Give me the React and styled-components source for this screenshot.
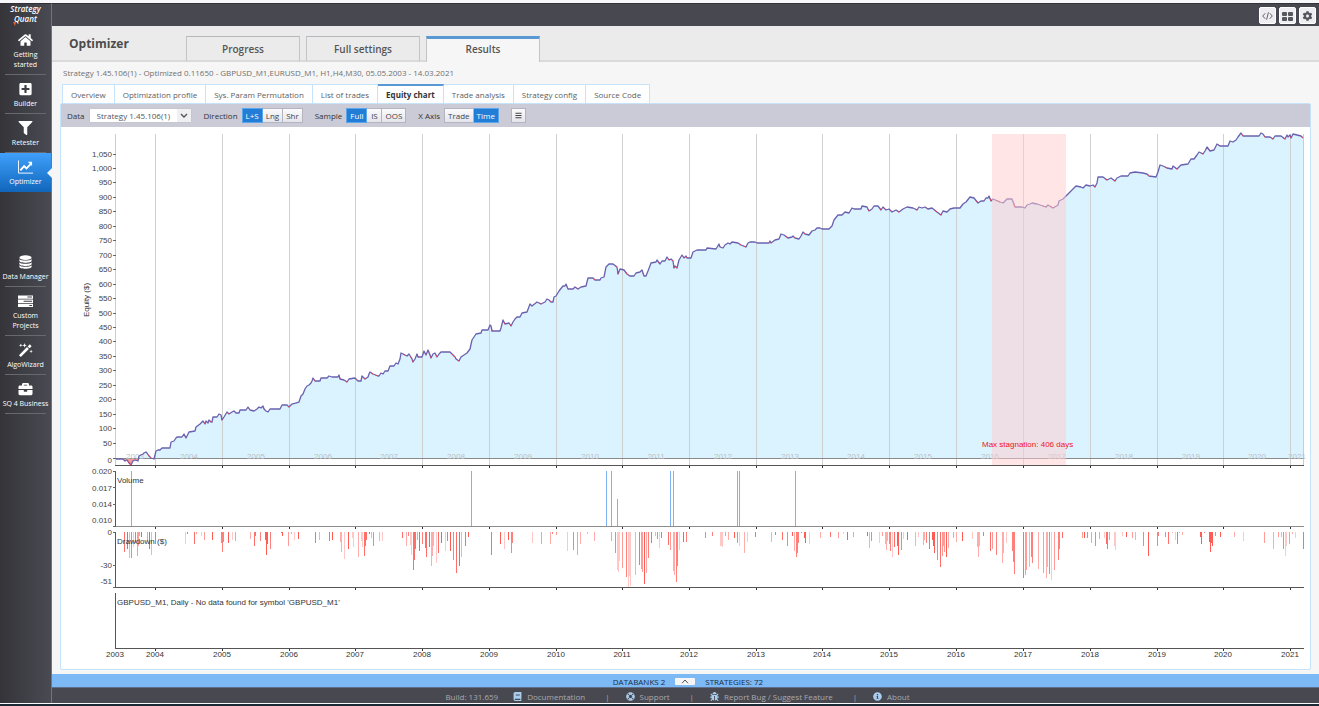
import React from "react"
import styled, {createGlobalStyle} from "styled-components"
import {FaHome, FaPlusSquare, FaFilter, FaBriefcase, FaCog, FaBars, FaBook, FaLifeRing, FaBug, FaInfoCircle} from "react-icons/fa";

const GlobalStyle = createGlobalStyle`
  * {
    box-sizing: border-box;
  }
  body {
    margin: 0;
    background: #f8f8fb;
    font-family: "Open Sans", sans-serif;
    font-size: 8px;
  }
  button, select {
    font-family: inherit;
    margin: 0;
  }
`;

const Page = styled.div`
  display: flex;
  min-height: 100vh;
  border-top: 3px solid #f8f8fb;
  border-bottom: 2px solid #1c2a36;
  padding-bottom: 1px;
`;

const Sidebar = styled.nav`
  flex: 0 0 52px;
  display: flex;
  flex-direction: column;
  background: linear-gradient(to right, #343439, #4a4a53);
  border-top: 1px solid #2f2f35;
  border-right: 1px solid #74747c;
`;

const Logo = styled.div`
  height: 21px;
  color: #ffffff;
  font-size: 8px;
  font-style: italic;
  font-weight: 600;
  line-height: 10px;
  text-align: center;
  svg {
    display: block;
    width: 4px;
    height: 4px;
    margin: -2px 0 0 13px;
  }
`;

const SideLink = styled.a`
  position: relative;
  display: flex;
  flex-direction: column;
  align-items: center;
  padding: 7px 0 5px;
  margin-top: ${props => props.$spaced ? "56px" : "0"};
  color: #ffffff;
  font-size: 7px;
  line-height: 10px;
  text-align: center;
  text-decoration: none;
  white-space: pre;
  background: ${props => props.$active ? "linear-gradient(#3fa0fb, #1166bb)" : "none"};
  svg {
    width: 15px;
    height: 14px;
    margin-bottom: 3px;
  }
  &::after {
    content: "";
    position: absolute;
    left: 5px;
    right: 5px;
    bottom: 0;
    border-bottom: 1px solid ${props => props.$active ? "transparent" : "#68686f"};
  }
`;

const Notch = styled.span`
  position: absolute;
  right: -1px;
  top: 50%;
  margin-top: -5px;
  border: 5px solid transparent;
  border-right-color: #f6f6f6;
  border-left-width: 0;
`;

const SideLinks = styled.div`
  padding-top: 1px;
`;

const Main = styled.main`
  flex: 1;
  min-width: 0;
  display: flex;
  flex-direction: column;
  background: #f6f6f6;
`;

const TopBar = styled.header`
  display: flex;
  justify-content: flex-end;
  gap: 3px;
  height: 23px;
  padding: 3px 3px 0;
  background: #484850;
  border-top: 1px solid #33333a;
`;

const IconButton = styled.button`
  display: flex;
  align-items: center;
  justify-content: center;
  width: 17px;
  height: 17px;
  padding: 0;
  border: 1px solid #ffffff;
  border-radius: 2px;
  background: #eeeef2;
  color: #55555d;
  svg {
    width: 11px;
    height: 10px;
  }
`;

const Header = styled.div`
  display: flex;
  align-items: flex-end;
  height: 36px;
  background: #ebebeb;
  border-bottom: 2px solid #dadada;
`;

const Title = styled.h1`
  width: 134px;
  margin: 0;
  padding: 2px 0 0 17px;
  color: #4c4c4c;
  font-size: 12px;
  line-height: 16px;
  font-weight: 700;
  align-self: center;
`;

const MainTabs = styled.div`
  display: flex;
  gap: 6px;
  margin-bottom: -2px;
`;

const MainTab = styled.button`
  width: 114px;
  height: 26px;
  padding: ${props => props.$active ? "0 0 3px" : "0"};
  border: 1px solid #c4c4c8;
  border-top: ${props => props.$active ? "3px solid #5a98d3" : "1px solid #b8b8bc"};
  border-bottom: ${props => props.$active ? "0" : "2px solid #dadada"};
  background: ${props => props.$active ? "#f6f6f6" : "#ebebeb"};
  color: #555555;
  font-size: 10px;
  font-weight: 600;
`;

const Content = styled.div`
  flex: 1;
  display: flex;
  flex-direction: column;
  padding: 0 8px 4px;
`;

const StrategyName = styled.div`
  height: 22px;
  padding: 5px 3px;
  color: #707070;
  font-size: 8px;
  line-height: 12px;
`;

const SubTabs = styled.div`
  display: flex;
  height: 19px;
  padding-left: 2px;
`;

const SubTab = styled.button`
  padding: 0 8px;
  border: 1px solid #c5e3fa;
  border-left-width: ${props => props.$first ? "1px" : "0"};
  border-bottom: 0;
  border-top: ${props => props.$active ? "2px solid #5a98d3" : "1px solid #c5e3fa"};
  background: #ffffff;
  color: ${props => props.$active ? "#333333" : "#606060"};
  font-size: 8px;
  font-weight: ${props => props.$active ? 700 : 400};
  white-space: nowrap;
`;

const Panel = styled.section`
  flex: 1;
  border: 1px solid #c5e3fa;
  border-radius: 2px;
  background: #ffffff;
`;

const Toolbar = styled.div`
  display: flex;
  align-items: center;
  height: 23px;
  padding-left: 6px;
  background: #cbcbd8;
  color: #333333;
  font-size: 8px;
`;

const Field = styled.div`
  display: flex;
  align-items: center;
  gap: 4px;
  margin-right: 12px;
`;

const Select = styled.select`
  appearance: none;
  width: 103px;
  height: 15px;
  padding: 0 16px 0 7px;
  border: 1px solid #c6c6cc;
  border-radius: 1px;
  color: #555555;
  font-size: 8px;
  background: #ffffff url("data:image/svg+xml,%3Csvg xmlns='http://www.w3.org/2000/svg' viewBox='0 0 14 13'%3E%3Cpath fill='%23f0f0f3' d='M0 0h14v13H0z'/%3E%3Cpath fill='none' stroke='%23555' stroke-width='1.4' d='M4 5l3 3 3-3'/%3E%3C/svg%3E") right center / 14px 13px no-repeat;
`;

const Group = styled.div`
  display: flex;
`;

const Toggle = styled.button`
  height: 15px;
  min-width: 15px;
  padding: 0 3px;
  border: 1px solid ${props => props.$on ? "#5ba5ea" : "#b4b4bf"};
  background: ${props => props.$on ? "#217dd6" : "linear-gradient(#fbfbfd, #e4e4ec)"};
  color: ${props => props.$on ? "#ffffff" : "#444444"};
  font-size: 8px;
  line-height: 12px;
  & + & {
    border-left: 0;
  }
  svg {
    display: block;
    width: 7px;
    height: 7px;
  }
`;

const Chart = styled.svg`
  display: block;
  width: 100%;
  height: auto;
  font-family: "Liberation Sans", Arial, sans-serif;
  font-size: 8px;
`;

const Databanks = styled.div`
  display: flex;
  align-items: center;
  justify-content: center;
  gap: 10px;
  height: 14px;
  padding: 1px 0 0 5px;
  background: #7cb9f5;
  border-bottom: 1px solid #5d6f8c;
  color: #1d2c3c;
  font-size: 8px;
`;

const Expand = styled.button`
  display: flex;
  align-items: center;
  justify-content: center;
  width: 20px;
  height: 7px;
  padding: 0;
  border: 0;
  border-radius: 1px;
  background: #f6f6f6;
  color: #555555;
  svg {
    width: 8px;
    height: 5px;
  }
`;

const Footer = styled.footer`
  display: flex;
  align-items: center;
  justify-content: center;
  height: 15px;
  padding-right: 16px;
  padding-top: 2px;
  background: #484850;
  color: #a9a9ae;
  font-size: 8px;
`;

const FooterLink = styled.a`
  display: flex;
  align-items: center;
  gap: 5px;
  color: inherit;
  text-decoration: none;
  svg {
    width: 9px;
    height: 9px;
    color: #a9cdec;
  }
`;

const Build = styled.span`
  margin-right: 15px;
`;

const Bar = styled.span`
  margin: 0 16px 0 20px;
`;

const DatabaseIcon = () => (
  <svg viewBox="0 0 16 16" fill="currentColor">
    <ellipse cx="8" cy="3" rx="7" ry="2.6"/>
    <path d="M1 4.6c1.5 2.3 12.500 2.300 14 0v2c0 3-14 3-14 0zM1 8.200c1.500 2.300 12.500 2.300 14 0v2c0 3-14 3-14 0zM1 11.800c1.500 2.300 12.500 2.300 14 0v1.600c0 3-14 3-14 0z"/>
  </svg>
)

const TasksIcon = () => (
  <svg viewBox="0 0 16 14" fill="currentColor" fillRule="evenodd">
    <path d="M0 1h16v3.500H0zM10 2.200h5v1h-5zM0 5.500h16V9H0zM6 6.700h9v1H6zM0 10h16v3.500H0zM12 11.200h3v1h-3z"/>
  </svg>
)

const TrendIcon = () => (
  <svg viewBox="0 0 16 14" fill="none" stroke="currentColor">
    <path d="M.5 0v13.500H16"/>
    <path d="M2.500 10.500l4-4.500 2.500 2.500L13.500 4" strokeWidth="2"/>
    <path d="M10.500 1.500H15V6z" fill="currentColor" stroke="none"/>
  </svg>
)

const WandIcon = () => (
  <svg viewBox="0 0 16 15" fill="currentColor">
    <path d="M1 13L9.600 4.400l2 2L3 15zM10.300 3.700L12.600 1.400l2 2-2.300 2.300z"/>
    <path d="M3 .5l.5 1.500 1.500.5-1.500.5L3 4.500 2.500 3 1 2.500 2.500 2zM7 0l.6 1.900 1.900.6-1.900.6L7 5l-.6-1.900-1.900-.6 1.900-.6zM14 7l.5 1.500 1.500.5-1.500.5-.5 1.500-.5-1.500L12 9l1.500-.5z"/>
  </svg>
)

const CodeIcon = () => (
  <svg viewBox="0 0 12 10" fill="none" stroke="currentColor">
    <path d="M3.500 2L.8 5l2.700 3M8.500 2l2.700 3-2.700 3M7 1L5 9"/>
  </svg>
)

const TilesIcon = () => (
  <svg viewBox="0 0 11 10" fill="currentColor">
    <rect x="0" y="1" width="5" height="4" rx="1"/>
    <rect x="6" y="1" width="5" height="4" rx="1"/>
    <rect x="0" y="6" width="5" height="4" rx="1"/>
    <rect x="6" y="6" width="5" height="4" rx="1"/>
  </svg>
)

const UpIcon = () => (
  <svg viewBox="0 0 8 5" fill="none" stroke="currentColor">
    <path d="M1 4.200L4 1l3 3.200"/>
  </svg>
)

const sideLinks = [
  {label: "Getting\nstarted", icon: FaHome},
  {label: "Builder", icon: FaPlusSquare},
  {label: "Retester", icon: FaFilter},
  {label: "Optimizer", icon: TrendIcon, active: true},
  {label: "Data Manager", icon: DatabaseIcon, spaced: true},
  {label: "Custom\nProjects", icon: TasksIcon},
  {label: "AlgoWizard", icon: WandIcon},
  {label: "SQ 4 Business", icon: FaBriefcase},
]

const subTabs = ["Overview", "Optimization profile", "Sys. Param Permutation", "List of trades", "Equity chart", "Trade analysis", "Strategy config", "Source Code"]

const equity = `116,459 122,459 124,460 125,461 127,460 129,463 131,465 133,461 135,460 138,461 139,456 141,455 143,454 144,453 146,452 147,453 149,456
151,458 154,459 155,455 156,451 158,450 160,450 162,448 170,448 171,442 174,441 176,438 177,437 182,437 184,434 186,438 188,434 189,432
195,431 196,427 200,424 203,421 205,424 206,421 208,423 209,420 211,422 212,422 213,417 217,417 219,414 221,415 222,420 224,417 227,412
229,414 232,412 234,411 236,413 239,413 240,410 246,410 248,407 250,410 254,411 257,409 259,407 261,408 263,406 264,409 266,411 268,412
270,409 280,409 282,405 287,405 289,407 292,404 299,402 301,396 303,394 305,389 307,386 309,385 311,383 312,381 313,378 315,381 320,381
321,378 327,378 329,376 332,377 338,377 339,375 340,379 344,380 347,382 349,379 355,378 358,381 361,381 362,376 365,379 368,377 369,374
370,372 373,374 378,376 379,376 381,373 383,374 385,371 388,371 390,366 394,366 396,363 398,364 400,359 401,353 405,355 407,356 409,354
412,359 413,362 415,359 417,354 418,357 422,357 424,351 426,355 428,350 430,355 431,358 433,354 435,353 437,357 439,354 441,352 450,352
453,355 455,357 456,359 459,361 461,357 464,355 467,353 470,349 472,340 474,337 476,334 481,333 482,330 488,330 490,325 491,326 492,331
500,331 501,328 503,320 505,324 509,323 511,326 513,322 515,319 517,317 520,317 522,313 527,312 530,304 532,306 537,302 541,304 545,302
547,299 549,300 551,302 553,302 554,297 556,296 559,291 563,286 565,286 566,284 568,289 573,289 575,287 578,289 581,287 586,286 588,278
593,278 595,280 600,280 601,278 604,277 606,267 609,264 613,264 617,267 618,274 620,269 624,270 627,274 630,276 634,276 636,273 640,272
642,270 644,276 646,276 648,271 651,263 656,262 657,260 660,264 662,261 665,261 667,257 669,260 671,259 673,261 674,268 675,266 677,268
679,260 682,255 684,258 686,256 687,258 691,258 693,252 697,250 706,250 707,248 716,249 719,244 720,247 723,248 725,245 728,243 730,244
732,242 738,243 741,245 746,247 748,243 750,242 755,242 757,243 769,243 770,241 771,243 775,240 779,239 781,234 784,235 788,238 792,237
793,236 795,238 799,239 801,236 803,232 805,234 809,235 812,231 815,230 817,228 820,228 822,229 829,229 832,226 834,220 838,215 842,215
845,212 849,213 852,208 854,209 861,209 862,206 867,207 869,211 872,209 874,206 878,206 881,210 883,207 886,210 889,209 892,212 896,210
899,212 903,209 907,207 913,208 917,210 919,207 922,208 925,207 928,209 932,208 937,212 941,215 943,211 947,212 950,209 954,208 960,208
963,204 966,202 970,197 974,198 978,203 981,201 984,201 986,198 988,198 989,196 991,201 993,199 1000,202 1003,203 1007,199 1012,199
1015,207 1022,207 1025,208 1027,205 1030,204 1032,203 1037,204 1040,205 1046,207 1048,205 1053,208 1058,205 1059,201 1063,199 1066,196
1070,192 1076,186 1081,187 1083,188 1086,185 1090,186 1093,185 1095,187 1097,183 1098,177 1103,177 1107,180 1111,178 1115,181 1117,178
1121,176 1128,176 1130,173 1135,172 1143,173 1147,174 1149,176 1156,177 1158,172 1160,165 1163,166 1167,168 1172,169 1173,166 1177,169
1181,165 1188,164 1191,159 1194,159 1197,155 1199,152 1203,154 1205,151 1207,147 1210,151 1214,150 1217,144 1220,146 1228,146 1230,141
1233,142 1236,140 1238,137 1241,133 1243,136 1259,136 1261,133 1263,134 1265,137 1270,137 1273,139 1275,136 1281,136 1285,139 1287,135
1288,137 1290,135 1291,138 1293,134 1297,135 1301,136 1303,138`.split(/\s+/).map(p => p.split(",").map(Number))

// x and length of every drawdown bar
const drawdowns = `124,20 127,17 129,26 131,26 133,15 135,11 137,24 138,14 139,4 141,5 147,8 149,17 151,23 155,12 185,12 187,2 194,12 196,2
201,4 204,8 212,8 221,11 222,20 223,10 228,11 232,8 235,9 250,7 254,14 255,4 260,9 265,8 266,23 267,12 270,17 281,1 282,4 288,14 291,2
294,8 298,7 315,11 319,8 329,9 332,8 340,10 341,20 344,27 348,17 352,6 353,15 358,25 361,9 362,15 364,24 365,14 366,8 369,2 371,6 373,14
379,9 382,9 402,6 406,14 408,4 410,13 411,23 413,38 414,28 415,17 417,8 419,19 422,12 425,16 426,25 429,15 431,34 432,24 433,14 436,31
438,21 441,11 445,19 447,9 450,19 453,28 456,41 459,34 461,25 465,14 468,5 491,23 500,12 504,17 508,8 511,21 512,11 532,11 541,12 550,12
552,2 556,3 567,19 573,18 577,23 580,12 587,2 594,9 611,9 615,21 617,38 618,40 619,29 622,36 626,45 628,55 629,44 630,54 635,43 639,33
641,37 642,40 644,52 646,41 648,26 651,11 655,4 657,7 659,16 661,6 668,13 670,18 673,39 674,43 676,50 677,34 679,18 683,10 686,10 705,6
712,4 720,14 721,14 722,15 725,4 728,8 734,6 737,11 739,14 744,21 747,10 755,5 771,10 775,3 782,8 787,14 792,4 794,19 796,25 797,21
798,11 801,1 804,6 805,11 809,12 820,6 830,5 838,6 843,2 847,8 853,5 867,4 869,16 871,9 879,11 882,4 885,12 886,18 887,9 889,12 890,19
892,25 894,15 897,14 898,23 901,18 903,7 907,8 915,14 918,5 923,13 924,8 926,11 929,17 932,8 933,14 934,21 937,28 940,35 942,24 943,14
944,20 946,25 948,16 953,6 956,10 962,9 972,7 977,15 978,25 979,14 983,4 990,19 992,17 996,23 1002,31 1003,21 1006,11 1012,19 1013,30
1014,42 1023,46 1025,43 1026,38 1029,35 1031,25 1032,31 1038,37 1043,41 1046,46 1047,35 1049,42 1051,48 1054,38 1058,28 1059,17 1062,6
1082,6 1084,6 1087,6 1091,11 1095,14 1099,7 1104,6 1106,12 1107,17 1109,8 1114,14 1115,18 1122,4 1126,5 1132,6 1135,8 1143,14 1148,24
1157,14 1158,4 1165,5 1168,12 1172,1 1175,8 1177,12 1179,1 1182,3 1200,5 1201,12 1204,1 1209,10 1210,20 1211,11 1212,14 1215,4 1220,5
1234,5 1243,9 1264,11 1273,17 1278,5 1281,5 1283,17 1285,24 1286,14 1289,12 1292,2 1295,6 1303,17`.split(/\s+/).map(p => p.split(",").map(Number))

const volumes = [[131, 471], [471, 471], [606, 471], [611, 471], [617, 499], [670, 471], [673, 471], [737, 471], [739, 471], [795, 471]]

const years = [155, 222, 289, 355, 422, 489, 556, 622, 689, 756, 822, 889, 956, 1023, 1090, 1157, 1223, 1290]

const barOpacity = [0.9, 0.45, 0.7, 0.3, 0.8, 0.55]

function EquityChart() {
  const line = equity.map(p => p.join(",")).join(" ")
  const area = `116,458 ${line} 1303,458`
  const losses = equity.slice(1).map((p, i) => [equity[i], p]).filter(([a, b]) => b[1] - a[1] > 1)
  const steps = Array.from({length: 21}, (_, i) => (i + 1) * 50)
  return <Chart viewBox="61 127 1249 542" role="img" aria-label="Equity chart">
    <defs>
      <clipPath id="profit"><rect x="115" y="127" width="1190" height="331"/></clipPath>
      <clipPath id="loss"><rect x="115" y="458" width="1190" height="9"/></clipPath>
    </defs>
    <polygon points={area} fill="#daf3ff" clipPath="url(#profit)"/>
    <polygon points={area} fill="#f59a96" clipPath="url(#loss)"/>

    {years.map(x => <rect key={x} x={x} y="134" width="1" height="332" fill="#c9c9c9" fillOpacity="0.85"/>)}
    <rect x="115" y="134" width="1" height="332" fill="#cccccc"/>
    <rect x="1303" y="134" width="1" height="332" fill="#cccccc"/>
    <rect x="115" y="458" width="1189" height="1" fill="#8a8a8a"/>

    <g fill="#bcc2c5" textAnchor="middle">
      <text x="135" y="459">2003</text>
      {years.slice(0, -1).map((x, i) => <text key={x} x={x + 34} y="459">{2004 + i}</text>)}
      <text x="1297" y="459">2021</text>
    </g>

    <polyline points={line} fill="none" stroke="#6961b0" strokeWidth="1.3" strokeLinejoin="round"/>
    {losses.map(([a, b]) => <line key={a[0]} x1={(a[0] + b[0]) / 2} y1={(a[1] + b[1]) / 2} x2={b[0]} y2={b[1]} stroke="#e0405a" strokeWidth="1"/>)}

    <rect x="992" y="134" width="74" height="332" fill="#ffcccc" fillOpacity="0.5"/>
    <text x="982" y="447" fill="#f0141e">Max stagnation: 406 days</text>

    {[465, 526, 587, 648].map((y, i) => <g key={y} fill={i === 1 ? "#8c8c8c" : "#555555"}>
      <rect x="115" y={y} width="1189" height="1"/>
      {years.map(x => <rect key={x} x={x} y={y + 1} width="1" height="2" fill="#333333"/>)}
    </g>)}
    {[471, 532, 593].map(y => <rect key={y} x="115" y={y} width="1" height="56" fill="#555555"/>)}

    {volumes.map(([x, y]) => <rect key={x} x={x} y={y} width="1" height={526 - y} fill="#7fb2f3"/>)}
    {drawdowns.map(([x, h], i) => <rect key={x} x={x} y="532" width="1" height={h} fill="#ff4a42" fillOpacity={barOpacity[(i * 5 + x) % 6]}/>)}

    <g fill="#444444" textAnchor="end">
      {steps.map(v => <text key={v} x="112" y={Math.round(460 - v * 0.289)}>{v.toLocaleString("en-US")}</text>)}
      <text x="112" y="463">0</text>
      <text x="112" y="474">0.020</text>
      <text x="112" y="491">0.017</text>
      <text x="112" y="507">0.014</text>
      <text x="112" y="523">0.010</text>
      <text x="112" y="535">0</text>
      <text x="112" y="568">-30</text>
      <text x="112" y="584">-51</text>
    </g>
    {steps.map(v => <rect key={v} x="113" y={Math.round(457 - v * 0.289)} width="3" height="1" fill="#666666"/>)}
    {[458, 471, 487, 504, 526, 532, 565, 587].map(y => <rect key={y} x="113" y={y} width="3" height="1" fill="#666666"/>)}

    <g fill="#333333">
      <text x="117" y="483">Volume</text>
      <text x="117" y="544">Drawdown ($)</text>
      <text x="117" y="605">GBPUSD_M1, Daily - No data found for symbol 'GBPUSD_M1'</text>
      <text transform="translate(89 300) rotate(-90)" textAnchor="middle">Equity ($)</text>
    </g>
    <g fill="#333333" textAnchor="middle">
      <text x="115" y="657">2003</text>
      {years.map((x, i) => <text key={x} x={x} y="657">{2004 + i}</text>)}
    </g>
  </Chart>
}

class App extends React.Component {
  render() {
    return <>
      <GlobalStyle/>
      <Page>
        <Sidebar>
          <Logo>
            Strategy<br/>Quant
            <svg viewBox="0 0 4 4"><path d="M0 0h3L2 4z" fill="#e8632a"/></svg>
          </Logo>
          <SideLinks>
            {sideLinks.map(({label, icon: Icon, active, spaced}) => (
              <SideLink key={label} href="#" $active={active} $spaced={spaced}>
                <Icon/>
                {label}
                {active && <Notch/>}
              </SideLink>
            ))}
          </SideLinks>
        </Sidebar>
        <Main>
          <TopBar>
            <IconButton aria-label="Code editor"><CodeIcon/></IconButton>
            <IconButton aria-label="Layout"><TilesIcon/></IconButton>
            <IconButton aria-label="Settings"><FaCog/></IconButton>
          </TopBar>
          <Header>
            <Title>Optimizer</Title>
            <MainTabs>
              <MainTab>Progress</MainTab>
              <MainTab>Full settings</MainTab>
              <MainTab $active>Results</MainTab>
            </MainTabs>
          </Header>
          <Content>
            <StrategyName>Strategy 1.45.106(1) - Optimized 0.11650 - GBPUSD_M1,EURUSD_M1, H1,H4,M30, 05.05.2003 - 14.03.2021</StrategyName>
            <SubTabs>
              {subTabs.map((tab, i) => <SubTab key={tab} $first={i === 0} $active={tab === "Equity chart"}>{tab}</SubTab>)}
            </SubTabs>
            <Panel>
              <Toolbar>
                <Field>
                  <label htmlFor="data">Data</label>
                  <Select id="data"><option>Strategy 1.45.106(1)</option></Select>
                </Field>
                <Field>
                  <span>Direction</span>
                  <Group>
                    <Toggle $on>L+S</Toggle>
                    <Toggle>Lng</Toggle>
                    <Toggle>Shr</Toggle>
                  </Group>
                </Field>
                <Field>
                  <span>Sample</span>
                  <Group>
                    <Toggle $on>Full</Toggle>
                    <Toggle>IS</Toggle>
                    <Toggle>OOS</Toggle>
                  </Group>
                </Field>
                <Field>
                  <span>X Axis</span>
                  <Group>
                    <Toggle>Trade</Toggle>
                    <Toggle $on>Time</Toggle>
                  </Group>
                </Field>
                <Toggle aria-label="Menu"><FaBars/></Toggle>
              </Toolbar>
              <EquityChart/>
            </Panel>
          </Content>
          <Databanks>
            <span>DATABANKS 2</span>
            <Expand aria-label="Expand"><UpIcon/></Expand>
            <span>STRATEGIES: 72</span>
          </Databanks>
          <Footer>
            <Build>Build: 131.659</Build>
            <FooterLink href="#"><FaBook/>Documentation</FooterLink>
            <Bar>|</Bar>
            <FooterLink href="#"><FaLifeRing/>Support</FooterLink>
            <Bar>|</Bar>
            <FooterLink href="#"><FaBug/>Report Bug / Suggest Feature</FooterLink>
            <Bar>|</Bar>
            <FooterLink href="#"><FaInfoCircle/>About</FooterLink>
          </Footer>
        </Main>
      </Page>
    </>
  }
}

export default App;
